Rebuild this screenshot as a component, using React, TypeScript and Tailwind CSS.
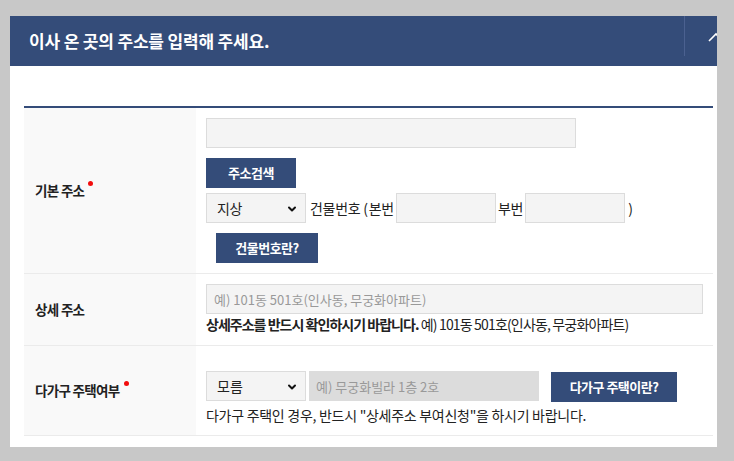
import { ChevronDown } from "lucide-react";

const NAVY = "bg-[#344c79]";

function Select({ value }: { value: string }) {
  return (
    <div className="relative w-[100px] h-[30px] shrink-0">
      <select
        defaultValue={value}
        className="appearance-none w-full h-full bg-[#f4f4f4] border border-[#dcdcdc] pl-[10px] text-[14px] text-[#222] outline-none"
      >
        <option>{value}</option>
      </select>
      <ChevronDown
        size={12}
        strokeWidth={4}
        className="absolute right-[8px] top-[10px] text-[#111] pointer-events-none"
      />
    </div>
  );
}

function Btn({ children, w }: { children: React.ReactNode; w: string }) {
  return (
    <button
      className={`${NAVY} ${w} h-[30px] text-white text-[13px] font-bold tracking-[-0.04em] shrink-0`}
    >
      {children}
    </button>
  );
}

function Label({ text, required }: { text: string; required?: boolean }) {
  return (
    <div className="bg-[#f9f9f9] flex items-center pl-[11px] text-[13.5px] font-bold text-[#222] tracking-[-0.05em]">
      <span>{text}</span>
      {required && (
        <span className="ml-[4px] mb-[14px] w-[5px] h-[5px] rounded-full bg-[#f20d0d]" />
      )}
    </div>
  );
}

export default function App() {
  return (
    <div className="min-h-[461px] bg-[#c8c8c8] pt-[16px] pl-[10px] pr-[17px] pb-[14px] font-['Noto_Sans_CJK_KR',sans-serif]">
      <section className="bg-white overflow-hidden h-[431px]">
        <header className={`${NAVY} h-[50px] flex`}>
          <h1 className="flex-1 pl-[19px] pt-[12px] text-[17px] font-bold text-white tracking-[-0.01em]">
            이사 온 곳의 주소를 입력해 주세요.
          </h1>
          <div className="w-px h-[40px] bg-[#4b6190]" />
          <div className="relative w-[32px] overflow-hidden">
            <svg
              width="16"
              height="10"
              viewBox="0 0 16 10"
              className="absolute left-[23px] top-[16px]"
            >
              <path d="M1 9 L8 2 L15 9" fill="none" stroke="#fff" strokeWidth="1.6" />
            </svg>
          </div>
        </header>

        <div className="pt-[40px] pl-[14px] pr-[4px]">
          <div className="border-t-2 border-[#344c79]">
            <div className="grid grid-cols-[172px_1fr] border-b border-[#ebebeb]">
              <Label text="기본 주소" required />
              <div className="pl-[10px] py-[10px] flex flex-col items-start text-[14px] text-[#222]">
                <input className="w-[370px] h-[30px] bg-[#f4f4f4] border border-[#dcdcdc] outline-none" />
                <div className="mt-[10px]">
                  <Btn w="w-[90px]">주소검색</Btn>
                </div>
                <div className="mt-[5px] flex items-center tracking-[-0.02em]">
                  <Select value="지상" />
                  <span className="ml-[4px]">건물번호 (</span>
                  <span className="ml-[1px]">본번</span>
                  <input className="ml-[2px] w-[100px] h-[30px] bg-[#f4f4f4] border border-[#dcdcdc] outline-none" />
                  <span className="ml-[2px]">부번</span>
                  <input className="ml-[2px] w-[100px] h-[30px] bg-[#f4f4f4] border border-[#dcdcdc] outline-none" />
                  <span className="ml-[3px]">)</span>
                </div>
                <div className="mt-[10px] ml-[10px]">
                  <Btn w="w-[102px]">건물번호란?</Btn>
                </div>
              </div>
            </div>

            <div className="grid grid-cols-[172px_1fr] border-b border-[#ebebeb]">
              <Label text="상세 주소" />
              <div className="pl-[10px] pt-[10px] pb-[11px] text-[14px] text-[#222]">
                <input
                  placeholder="예) 101동 501호(인사동, 무궁화아파트)"
                  className="block w-[497px] h-[30px] bg-[#f4f4f4] border border-[#dcdcdc] px-[7px] text-[13px] placeholder:text-[#999] outline-none"
                />
                <p className="h-[20px] leading-[20px] tracking-[-0.06em]">
                  <b className="tracking-[-0.07em]">상세주소를 반드시 확인하시기 바랍니다.</b> 예) 101동 501호(인사동, 무궁화아파트)
                </p>
              </div>
            </div>

            <div className="grid grid-cols-[172px_1fr] border-b border-[#ebebeb]">
              <Label text="다가구 주택여부" required />
              <div className="pl-[10px] pt-[24px] pb-[10px] text-[14px] text-[#222]">
                <div className="flex items-center">
                  <Select value="모름" />
                  <input
                    disabled
                    placeholder="예) 무궁화빌라 1층 2호"
                    className="ml-[3px] w-[230px] h-[30px] bg-[#dcdcdc] px-[7px] text-[13px] placeholder:text-[#999] outline-none"
                  />
                  <div className="ml-[12px] mt-[2px]">
                    <Btn w="w-[126px]">다가구 주택이란?</Btn>
                  </div>
                </div>
                <p className="mt-[3px] h-[20px] leading-[20px] tracking-[-0.02em]">
                  다가구 주택인 경우, 반드시 "상세주소 부여신청"을 하시기 바랍니다.
                </p>
              </div>
            </div>
          </div>
        </div>
      </section>
    </div>
  );
}
